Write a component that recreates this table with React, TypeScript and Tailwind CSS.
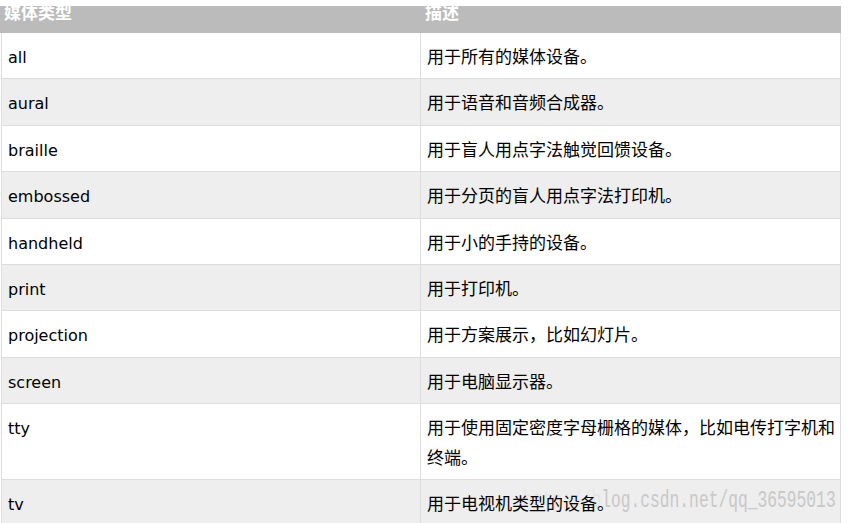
const rows: [string, string][] = [
  ["all", "用于所有的媒体设备。"],
  ["aural", "用于语音和音频合成器。"],
  ["braille", "用于盲人用点字法触觉回馈设备。"],
  ["embossed", "用于分页的盲人用点字法打印机。"],
  ["handheld", "用于小的手持的设备。"],
  ["print", "用于打印机。"],
  ["projection", "用于方案展示，比如幻灯片。"],
  ["screen", "用于电脑显示器。"],
  ["tty", "用于使用固定密度字母栅格的媒体，比如电传打字机和终端。"],
  ["tv", "用于电视机类型的设备。"],
];

export default function App() {
  return (
    <div className="w-[849px] h-[523px] overflow-hidden bg-white pt-[6px] text-black">
      <div className="w-[841px]">
        <div className="flex h-[27px] overflow-hidden bg-[#bbbbbb] text-[17px] font-bold text-white font-['Noto_Sans_CJK_SC',sans-serif]">
          <div className="w-[421px] pl-[4px]">
            <span className="block leading-[17px] -mt-[3px]">媒体类型</span>
          </div>
          <div className="w-[420px] pl-[4px]">
            <span className="block leading-[17px] -mt-[3px]">描述</span>
          </div>
        </div>
        {rows.map(([type, desc], i) => (
          <div
            key={type}
            className={`relative flex ml-px border-b border-[#dddddd] ${i % 2 === 1 ? "bg-[#eeeeee]" : "bg-white"}`}
          >
            <div className="w-[420px] shrink-0 border-x border-[#dddddd] pl-[6px] pt-[10px] pb-[6px] leading-[29.4px] text-[16px] font-['DejaVu_Sans',sans-serif]">
              {type}
            </div>
            <div className="relative w-[420px] shrink-0 border-r border-[#dddddd] pl-[6px] py-[8px] leading-[29.4px] text-[17px] font-['Noto_Sans_CJK_SC',sans-serif]">
              {type === "tv" && (
                <span className="absolute left-[102px] top-[16px] whitespace-nowrap leading-[20px] text-[16.3px] scale-y-150 origin-bottom-left text-[#c8c8c8] font-['Liberation_Mono',monospace]">
                  <span className="text-[#e6e6e6]">http://b</span>log.csdn.net/qq_36595013
                </span>
              )}
              <span className="relative">{desc}</span>
            </div>
          </div>
        ))}
      </div>
    </div>
  );
}
